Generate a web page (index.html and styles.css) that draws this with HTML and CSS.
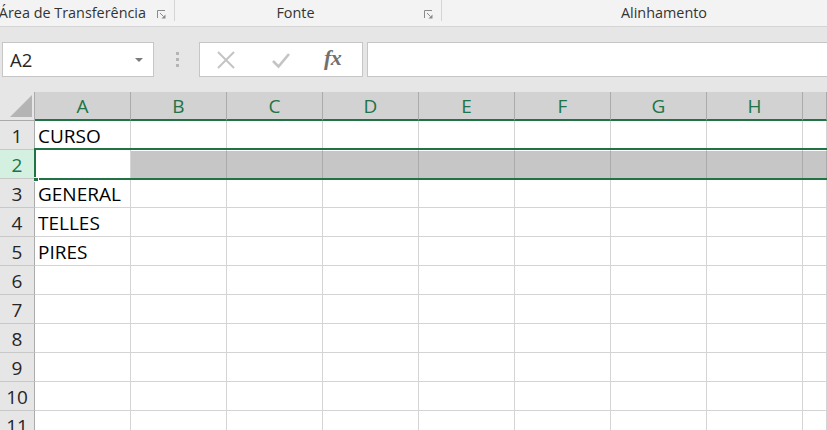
FILE: index.html
```html
<!DOCTYPE html>
<html lang="pt">
<head>
<meta charset="utf-8">
<title>Excel</title>
<link rel="stylesheet" href="styles.css">
</head>
<body>
<div class="ribbon">
  <div class="group g1">
    <span class="glabel">Área de Transferência</span>
    <svg class="launcher" width="9" height="9" viewBox="0 0 9 9"><path d="M0.5 8V0.5H8" fill="none" stroke="#8a8a8a"/><path d="M3 3L6.5 6.5" stroke="#8a8a8a"/><path d="M8.5 4.5V8.5H4.5Z" fill="#8a8a8a"/></svg>
  </div>
  <div class="sep"></div>
  <div class="group g2">
    <span class="glabel center">Fonte</span>
    <svg class="launcher" width="9" height="9" viewBox="0 0 9 9"><path d="M0.5 8V0.5H8" fill="none" stroke="#8a8a8a"/><path d="M3 3L6.5 6.5" stroke="#8a8a8a"/><path d="M8.5 4.5V8.5H4.5Z" fill="#8a8a8a"/></svg>
  </div>
  <div class="sep"></div>
  <div class="group g3">
    <span class="glabel center">Alinhamento</span>
  </div>
</div>

<div class="fbar">
  <div class="namebox">
    <span>A2</span>
    <svg class="dd" width="8" height="4" viewBox="0 0 8 4"><path d="M0 0H8L4 4Z" fill="#7a7a7a"/></svg>
  </div>
  <div class="dots"><i></i><i></i><i></i></div>
  <div class="fbtns">
    <svg class="fbtn" width="20" height="20" viewBox="0 0 20 20"><path d="M2 2L18 18M18 2L2 18" stroke="#c4c4c4" stroke-width="2"/></svg>
    <svg class="fbtn" width="20" height="20" viewBox="0 0 20 20"><path d="M2 11L7.5 16.5L18 4" fill="none" stroke="#c4c4c4" stroke-width="2.6"/></svg>
    <span class="fx">fx</span>
  </div>
  <div class="finput"></div>
</div>

<div class="sheet">
  <div class="grid">
    <div class="corner"><svg width="22" height="22" viewBox="0 0 22 22"><path d="M22 0V22H0Z" fill="#b4b4b4"/></svg></div>
    <div class="ch">A</div><div class="ch">B</div><div class="ch">C</div><div class="ch">D</div><div class="ch">E</div><div class="ch">F</div><div class="ch">G</div><div class="ch">H</div><div class="ch"></div>

    <div class="rh">1</div><div class="c">CURSO</div><div class="c"></div><div class="c"></div><div class="c"></div><div class="c"></div><div class="c"></div><div class="c"></div><div class="c"></div><div class="c"></div>

    <div class="rh sel">2</div><div class="c"></div><div class="c g"></div><div class="c g"></div><div class="c g"></div><div class="c g"></div><div class="c g"></div><div class="c g"></div><div class="c g"></div><div class="c g"></div>

    <div class="rh">3</div><div class="c">GENERAL</div><div class="c"></div><div class="c"></div><div class="c"></div><div class="c"></div><div class="c"></div><div class="c"></div><div class="c"></div><div class="c"></div>

    <div class="rh">4</div><div class="c">TELLES</div><div class="c"></div><div class="c"></div><div class="c"></div><div class="c"></div><div class="c"></div><div class="c"></div><div class="c"></div><div class="c"></div>

    <div class="rh">5</div><div class="c">PIRES</div><div class="c"></div><div class="c"></div><div class="c"></div><div class="c"></div><div class="c"></div><div class="c"></div><div class="c"></div><div class="c"></div>

    <div class="rh">6</div><div class="c"></div><div class="c"></div><div class="c"></div><div class="c"></div><div class="c"></div><div class="c"></div><div class="c"></div><div class="c"></div><div class="c"></div>

    <div class="rh">7</div><div class="c"></div><div class="c"></div><div class="c"></div><div class="c"></div><div class="c"></div><div class="c"></div><div class="c"></div><div class="c"></div><div class="c"></div>

    <div class="rh">8</div><div class="c"></div><div class="c"></div><div class="c"></div><div class="c"></div><div class="c"></div><div class="c"></div><div class="c"></div><div class="c"></div><div class="c"></div>

    <div class="rh">9</div><div class="c"></div><div class="c"></div><div class="c"></div><div class="c"></div><div class="c"></div><div class="c"></div><div class="c"></div><div class="c"></div><div class="c"></div>

    <div class="rh">10</div><div class="c"></div><div class="c"></div><div class="c"></div><div class="c"></div><div class="c"></div><div class="c"></div><div class="c"></div><div class="c"></div><div class="c"></div>

    <div class="rh">11</div><div class="c"></div><div class="c"></div><div class="c"></div><div class="c"></div><div class="c"></div><div class="c"></div><div class="c"></div><div class="c"></div><div class="c"></div>
  </div>
  <div class="selection"><div class="handle"></div></div>
</div>
</body>
</html>
```

FILE: styles.css
```css
* { box-sizing: border-box; }
html, body { margin: 0; padding: 0; }
body {
  width: 827px;
  height: 430px;
  overflow: hidden;
  background: #e6e6e6;
  font-family: "Open Sans", "Noto Sans", sans-serif;
  color: #262626;
}

.ribbon {
  height: 27px;
  background: #f3f3f3;
  border-bottom: 1px solid #d4d4d4;
  display: flex;
  align-items: flex-start;
  overflow: hidden;
}
.group {
  height: 26px;
  display: flex;
  align-items: center;
  flex: none;
}
.glabel {
  font-size: 14.4px;
  color: #333;
  white-space: nowrap;
  line-height: 28px;
}
.glabel.center { flex: 1; text-align: center; }
.g1 { width: 174px; justify-content: flex-end; }
.g1 .launcher { margin-left: 11px; margin-right: 8px; }
.g2 { width: 266px; }
.g2 .launcher { margin-left: 8px; margin-right: 8px; }
.g3 { width: 444px; }
.launcher { flex: none; margin-top: 3px; }
.sep {
  width: 1px;
  height: 21px;
  background: #d4d4d4;
  flex: none;
}

.fbar {
  height: 65px;
  padding-top: 15px;
  display: flex;
  align-items: flex-start;
}
.namebox {
  margin-left: 2px;
  width: 152px;
  height: 35px;
  background: #fff;
  border: 1px solid #c6c6c6;
  display: flex;
  align-items: center;
  justify-content: space-between;
  padding: 0 10px 0 7px;
  font-size: 18.5px;
  color: #262626;
}
.dd { margin-top: 1px; }
.dots {
  width: 45px;
  height: 35px;
  display: flex;
  flex-direction: column;
  align-items: center;
  justify-content: center;
  gap: 3px;
  padding-left: 1px;
}
.dots i {
  display: block;
  width: 3px;
  height: 3px;
  background: #b4b4b4;
}
.fbtns {
  width: 164px;
  height: 35px;
  background: #fff;
  border: 1px solid #c6c6c6;
  display: flex;
  align-items: center;
  padding-left: 16px;
}
.fbtn { flex: none; }
.fbtn + .fbtn { margin-left: 35px; }
.fx {
  margin-left: 33px;
  font-family: "Liberation Serif", "DejaVu Serif", serif;
  font-style: italic;
  font-weight: bold;
  font-size: 22px;
  color: #707070;
  line-height: 1;
  margin-top: -3px;
  letter-spacing: -0.5px;
}
.finput {
  margin-left: 4px;
  flex: 1;
  height: 35px;
  background: #fff;
  border: 1px solid #c6c6c6;
  border-right: none;
}

.sheet {
  position: relative;
  background: #fff;
}
.grid {
  display: grid;
  grid-template-columns: 35px repeat(8, 96px) 1fr;
  grid-template-rows: 29px repeat(11, 29px);
}
.corner {
  background: #e6e6e6;
  border-right: 1px solid #ababab;
  border-bottom: 1px solid #ababab;
  display: flex;
  align-items: flex-end;
  justify-content: flex-end;
  padding: 0 2px 3px 0;
}
.corner svg { display: block; }
.ch {
  background: #d2d2d2;
  border-right: 1px solid #ababab;
  border-bottom: 2px solid #217346;
  color: #217346;
  font-size: 19px;
  text-align: center;
  line-height: 28px;
}
.rh {
  background: #e6e6e6;
  border-right: 1px solid #ababab;
  border-bottom: 1px solid #c8c8c8;
  font-size: 19px;
  color: #262626;
  text-align: center;
  line-height: 30px;
}
.rh.sel {
  background: #d3f0e0;
  color: #217346;
}
.c {
  background: #fff;
  border-right: 1px solid #d4d4d4;
  border-bottom: 1px solid #d4d4d4;
  font-size: 19px;
  color: #000;
  padding-left: 3px;
  line-height: 31px;
  white-space: nowrap;
}
.c.g {
  background: #c6c6c6;
  border-right-color: #ababab;
  border-top: 1px solid #fff;
}
.selection {
  position: absolute;
  left: 34px;
  right: -4px;
  top: 56px;
  height: 32px;
  border: 2px solid #217346;
  pointer-events: none;
}
.handle {
  position: absolute;
  left: -2px;
  bottom: -4px;
  width: 5px;
  height: 5px;
  background: #217346;
  border: 1px solid #fff;
  border-left: none;
}
```
